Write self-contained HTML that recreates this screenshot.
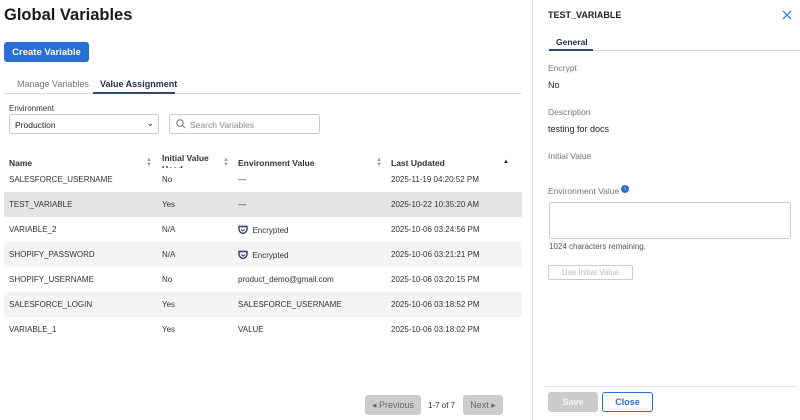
<!DOCTYPE html>
<html><head><style>
*{box-sizing:border-box;margin:0;padding:0}
body{width:800px;height:420px;overflow:hidden;background:#fff;font-family:"Liberation Sans",sans-serif;color:#222;position:relative;font-size:9px}
.a{position:absolute;white-space:nowrap}
.row{position:absolute;left:4px;width:518px;height:25px}
.row span{position:absolute;top:8px;font-size:8px;color:#333}
.hd{font-weight:bold;font-size:8.5px;color:#333}
.lbl{color:#777;font-size:8.5px}
.sort{position:absolute;font-size:6px;color:#999}
.btn{display:flex;align-items:center;justify-content:center}
</style></head><body>
<div class="a" style="left:4px;top:6px;font-size:16.5px;font-weight:bold;color:#1a1a1a">Global Variables</div>
<div class="a btn" style="left:4px;top:42px;width:85px;height:20px;background:#2a6fd6;border-radius:3px;color:#fff;font-weight:bold;font-size:9.5px">Create Variable</div>
<div class="a" style="left:4px;top:93px;width:518px;height:1px;background:#ddd"></div>
<div class="a" style="left:17px;top:79px;color:#777;font-size:9px">Manage Variables</div>
<div class="a" style="left:100px;top:79px;color:#1f2d4d;font-weight:bold;font-size:9px">Value Assignment</div>
<div class="a" style="left:93px;top:92px;width:82px;height:2px;background:#34466a"></div>
<div class="a" style="left:9px;top:104px;font-size:8px;color:#333">Environment</div>
<div class="a" style="left:9px;top:114px;width:150px;height:20px;border:1px solid #ccc;border-radius:3px;font-size:8.5px;padding:5px 5px;color:#222">Production<span style="position:absolute;right:4px;top:3px;font-size:9px">&#8964;</span></div>
<div class="a" style="left:169px;top:114px;width:151px;height:20px;border:1px solid #ccc;border-radius:3px;font-size:8.5px;padding:5px 20px;color:#888">Search Variables
<svg style="position:absolute;left:6px;top:4px" width="10" height="10" viewBox="0 0 10 10"><circle cx="4" cy="4" r="3.2" fill="none" stroke="#777" stroke-width="1"/><path d="M6.5 6.5L9 9" stroke="#777" stroke-width="1"/></svg></div>
<div class="a hd" style="left:9px;top:158px">Name</div>
<div class="a hd" style="left:162px;top:153px">Initial Value</div>
<div class="a hd" style="left:162px;top:164px;height:4px;overflow:hidden">Used</div>
<div class="a hd" style="left:238px;top:158px">Environment Value</div>
<div class="a hd" style="left:391px;top:158px">Last Updated</div>
<div class="sort" style="left:146px;top:157px">&#9650;<br></div><div class="sort" style="left:146px;top:162px">&#9660;</div>
<div class="sort" style="left:223px;top:157px">&#9650;</div><div class="sort" style="left:223px;top:162px">&#9660;</div>
<div class="sort" style="left:376px;top:157px">&#9650;</div><div class="sort" style="left:376px;top:162px">&#9660;</div>
<div class="sort" style="left:503px;top:159px;color:#222">&#9650;</div>
<div class="row" style="top:167px"><span style="left:5px">SALESFORCE_USERNAME</span><span style="left:158px">No</span><span style="left:234px">—</span><span style="left:387px">2025-11-19 04:20:52 PM</span></div>
<div class="row" style="top:192px;background:#e4e4e4"><span style="left:5px">TEST_VARIABLE</span><span style="left:158px">Yes</span><span style="left:234px">—</span><span style="left:387px">2025-10-22 10:35:20 AM</span></div>
<div class="row" style="top:217px"><span style="left:5px">VARIABLE_2</span><span style="left:158px">N/A</span><span style="left:234px"><svg width="10" height="9" viewBox="0 0 10 9" style="vertical-align:-1px"><path d="M1 1.5h8v2.5c0 2.5-2 4-4 4.5c-2-0.5-4-2-4-4.5z" fill="none" stroke="#2b3f66" stroke-width="1.4"/><path d="M3 4.5l2 1.5l2-1.5" fill="none" stroke="#2b3f66" stroke-width="1"/></svg>&nbsp; Encrypted</span><span style="left:387px">2025-10-06 03:24:56 PM</span></div>
<div class="row" style="top:242px;background:#f4f4f4"><span style="left:5px">SHOPIFY_PASSWORD</span><span style="left:158px">N/A</span><span style="left:234px"><svg width="10" height="9" viewBox="0 0 10 9" style="vertical-align:-1px"><path d="M1 1.5h8v2.5c0 2.5-2 4-4 4.5c-2-0.5-4-2-4-4.5z" fill="none" stroke="#2b3f66" stroke-width="1.4"/><path d="M3 4.5l2 1.5l2-1.5" fill="none" stroke="#2b3f66" stroke-width="1"/></svg>&nbsp; Encrypted</span><span style="left:387px">2025-10-06 03:21:21 PM</span></div>
<div class="row" style="top:267px"><span style="left:5px">SHOPIFY_USERNAME</span><span style="left:158px">No</span><span style="left:234px">product_demo@gmail.com</span><span style="left:387px">2025-10-06 03:20:15 PM</span></div>
<div class="row" style="top:292px;background:#f4f4f4"><span style="left:5px">SALESFORCE_LOGIN</span><span style="left:158px">Yes</span><span style="left:234px">SALESFORCE_USERNAME</span><span style="left:387px">2025-10-06 03:18:52 PM</span></div>
<div class="row" style="top:317px"><span style="left:5px">VARIABLE_1</span><span style="left:158px">Yes</span><span style="left:234px">VALUE</span><span style="left:387px">2025-10-06 03:18:02 PM</span></div>
<div class="a btn" style="left:365px;top:395px;width:56px;height:20px;background:#ccc;border-radius:3px;color:#666;font-size:9px">&#9666; Previous</div>
<div class="a" style="left:428px;top:401px;font-size:8px;color:#333">1-7 of 7</div>
<div class="a btn" style="left:463px;top:395px;width:40px;height:20px;background:#ccc;border-radius:3px;color:#666;font-size:9px">Next &#9656;</div>
<div class="a" style="left:532px;top:0;width:1px;height:420px;background:#e2e2e2"></div>
<div class="a" style="left:548px;top:10px;font-weight:bold;font-size:9px;color:#222">TEST_VARIABLE</div>
<svg class="a" style="left:782px;top:10px" width="10" height="10" viewBox="0 0 10 10"><path d="M1 1L9 9M9 1L1 9" stroke="#2a6fd6" stroke-width="1.2"/></svg>
<div class="a" style="left:545px;top:50px;width:255px;height:1px;background:#ddd"></div>
<div class="a" style="left:556px;top:37px;font-weight:bold;font-size:8.5px;color:#1f2d4d">General</div>
<div class="a" style="left:549px;top:49px;width:44px;height:2px;background:#34466a"></div>
<div class="a lbl" style="left:548px;top:63px">Encrypt</div>
<div class="a" style="left:548px;top:80px;font-size:9px">No</div>
<div class="a lbl" style="left:548px;top:107px">Description</div>
<div class="a" style="left:548px;top:124px;font-size:9px">testing for docs</div>
<div class="a lbl" style="left:548px;top:151px">Initial Value</div>
<div class="a lbl" style="left:548px;top:186px">Environment Value</div>
<div class="a" style="left:621px;top:185px;width:8px;height:8px;border-radius:50%;background:#2a6fd6;color:#fff;font-size:5px;text-align:center;line-height:8px">i</div>
<div class="a" style="left:549px;top:202px;width:242px;height:37px;border:1px solid #ccc;border-radius:3px"></div>
<div class="a" style="left:549px;top:242px;font-size:8px;color:#555">1024 characters remaining.</div>
<div class="a btn" style="left:548px;top:265px;width:85px;height:15px;border:1px solid #ccc;border-radius:2px;font-size:8px;color:#bbb">Use Initial Value</div>
<div class="a" style="left:545px;top:386px;width:252px;height:1px;background:#e2e2e2"></div>
<div class="a btn" style="left:548px;top:392px;width:50px;height:20px;background:#ccc;border-radius:3px;color:#f4f4f4;font-weight:bold;font-size:9px">Save</div>
<div class="a btn" style="left:602px;top:392px;width:51px;height:20px;border:1px solid #2a6fd6;border-radius:3px;color:#2a6fd6;font-weight:bold;font-size:9px">Close</div>
</body></html>
